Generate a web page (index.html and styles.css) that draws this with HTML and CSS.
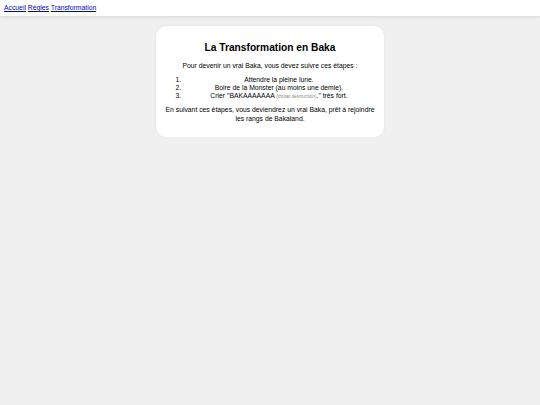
FILE: index.html
```html
<!DOCTYPE html>
<html lang="fr">
<head>
<meta charset="utf-8">
<title>La Transformation en Baka</title>
<link rel="stylesheet" href="styles.css">
</head>
<body>
<nav class="nav">
  <a href="#">Accueil</a> <a href="#">Règles</a> <a href="#">Transformation</a>
</nav>
<main class="card">
  <h2 class="title">La Transformation en Baka</h2>
  <p class="intro">Pour devenir un vrai Baka, vous devez suivre ces étapes :</p>
  <ol class="steps">
    <li>Attendre la pleine lune.</li>
    <li>Boire de la Monster (au moins une demie).</li>
    <li>Crier "BAKAAAAAAA <span class="small">(throat destruction)</span>." très fort.</li>
  </ol>
  <p class="outro">En suivant ces étapes, vous deviendrez un vrai Baka, prêt à rejoindre les rangs de Bakaland.</p>
</main>
</body>
</html>
```
FILE: styles.css
```css
html, body {
  margin: 0;
  padding: 0;
}
body {
  background: #f0f0f0;
  font-family: "Liberation Sans", Arial, sans-serif;
  color: #000;
}
.nav {
  background: #fff;
  height: 16px;
  box-sizing: border-box;
  padding: 3px 4px 0;
  font-size: 6.8px;
  line-height: 9px;
  box-shadow: 0 1px 3px rgba(0,0,0,0.12);
}
.nav a {
  color: #0000ee;
}
.card {
  width: 228px;
  box-sizing: border-box;
  margin: 10px auto 0;
  background: #fff;
  border-radius: 10px;
  padding: 10px 9px;
  text-align: center;
  box-shadow: 0 0 4px rgba(0,0,0,0.05);
}
.title {
  font-size: 10.2px;
  line-height: 13px;
  margin: 5px 0 8px;
  font-weight: bold;
}
.intro {
  font-size: 6.8px;
  line-height: 8px;
  margin: 0 0 6px;
}
.steps {
  font-size: 6.8px;
  line-height: 8px;
  margin: 0 0 5px;
  padding-left: 18px;
}
.small {
  font-size: 4.8px;
  color: #888;
}
.outro {
  font-size: 6.8px;
  line-height: 8.5px;
  margin: 0 0 4px;
}
```
